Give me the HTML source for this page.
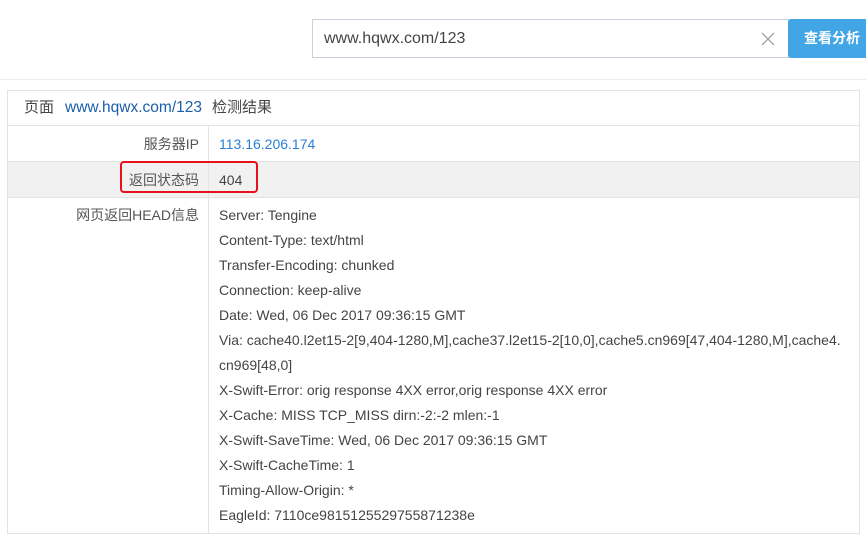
<!DOCTYPE html>
<html><head><meta charset="utf-8"><style>
*{margin:0;padding:0;box-sizing:border-box}
body{width:866px;height:540px;background:#fff;font-family:"Liberation Sans","Noto Sans CJK SC",sans-serif;font-size:14px;color:#444;position:relative;overflow:hidden}
.inp{position:absolute;left:312px;top:19px;width:477px;height:39px;border:1px solid #c8d0dc;font-size:16px;line-height:18px;color:#444;padding:10px 0 0 11px}
.x{position:absolute;right:12px;top:11px;width:16px;height:16px}
.btn{position:absolute;left:788px;top:19px;width:80px;height:39px;background:#42a5e6;color:#fff;font-weight:bold;font-size:14px;line-height:16px;padding:11px 0 0 16px;border-radius:3px 0 0 3px}
.sep{position:absolute;left:0;top:79px;width:866px;height:1px;background:#ececec}
.tbl{position:absolute;left:7px;top:90px;width:853px;height:444px;border:1px solid #e3e3e3}
.row{position:absolute;left:0;width:851px;border-bottom:1px solid #e3e3e3}
.lab{position:absolute;left:0;width:200px;text-align:right;color:#555;line-height:16px}
.val{position:absolute;left:211px;line-height:16px}
.vline{position:absolute;left:200px;top:35px;width:1px;height:408px;background:#e3e3e3}
.hl{line-height:25px;width:630px;word-break:break-all}
</style></head><body>
<div class="inp">www.hqwx.com/123<svg class="x" viewBox="0 0 16 16"><path d="M2 2L14 14M14 2L2 14" stroke="#999" stroke-width="1.2"/></svg></div>
<div class="btn">查看分析</div>
<div class="sep"></div>
<div class="tbl">
<div class="row" style="top:0;height:35px"><div style="position:absolute;left:16px;top:8px;font-size:15px;line-height:18px;color:#444">页面<span style="color:#1c5ea8;margin:0 10px 0 11px;font-size:15.5px">www.hqwx.com/123</span>检测结果</div></div>
<div class="row" style="top:35px;height:36px"><div class="lab" style="top:10px;width:191px">服务器IP</div><div class="val" style="top:10px;color:#2c7fd6">113.16.206.174</div></div>
<div class="row" style="top:71px;height:36px;background:#f1f1f1"><div class="lab" style="top:10px;width:191px">返回状态码</div><div class="val" style="top:10px">404</div></div>
<div class="vline"></div>
<div class="lab" style="top:116px;width:191px">网页返回HEAD信息</div>
<div class="val hl" style="top:112px;line-height:25px">Server: Tengine<br>Content-Type: text/html<br>Transfer-Encoding: chunked<br>Connection: keep-alive<br>Date: Wed, 06 Dec 2017 09:36:15 GMT<br>Via: cache40.l2et15-2[9,404-1280,M],cache37.l2et15-2[10,0],cache5.cn969[47,404-1280,M],cache4.<br>cn969[48,0]<br>X-Swift-Error: orig response 4XX error,orig response 4XX error<br>X-Cache: MISS TCP_MISS dirn:-2:-2 mlen:-1<br>X-Swift-SaveTime: Wed, 06 Dec 2017 09:36:15 GMT<br>X-Swift-CacheTime: 1<br>Timing-Allow-Origin: *<br>EagleId: 7110ce9815125529755871238e</div>
</div>
<div style="position:absolute;left:120px;top:161px;width:138px;height:32px;border:2px solid #e8101a;border-radius:4px"></div>
</body></html>
